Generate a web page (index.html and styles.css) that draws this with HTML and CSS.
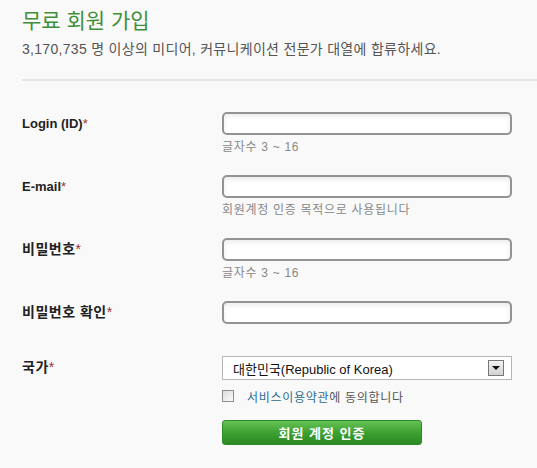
FILE: index.html
```html
<!DOCTYPE html>
<html lang="ko">
<head>
    <meta charset="UTF-8">
    <title>무료 회원 가입</title>
    <link rel="stylesheet" href="styles.css">
</head>
<body>

<div class="page">
    <div class="header">
        <h1 class="title">무료 회원 가입</h1>
        <p class="subtitle">3,170,735 명 이상의 미디어, 커뮤니케이션 전문가 대열에 합류하세요.</p>
    </div>

    <form class="signup">
        <div class="field">
            <label class="field-label">Login (ID)<span class="req">*</span></label>
            <div class="field-control">
                <input class="text-input" type="text">
                <div class="hint">글자수 3 ~ 16</div>
            </div>
        </div>

        <div class="field">
            <label class="field-label">E-mail<span class="req">*</span></label>
            <div class="field-control">
                <input class="text-input" type="text">
                <div class="hint">회원계정 인증 목적으로 사용됩니다</div>
            </div>
        </div>

        <div class="field">
            <label class="field-label ko">비밀번호<span class="req">*</span></label>
            <div class="field-control">
                <input class="text-input" type="password">
                <div class="hint">글자수 3 ~ 16</div>
            </div>
        </div>

        <div class="field no-hint">
            <label class="field-label ko">비밀번호 확인<span class="req">*</span></label>
            <div class="field-control">
                <input class="text-input" type="password">
            </div>
        </div>

        <div class="field">
            <label class="field-label ko">국가<span class="req">*</span></label>
            <div class="field-control">
                <div class="select-box">
                    <span>대한민국(Republic of Korea)</span>
                    <span class="select-arrow"></span>
                </div>
                <div class="agree">
                    <span class="checkbox"></span>
                    <span><a href="#">서비스이용약관</a>에 동의합니다</span>
                </div>
                <button type="button" class="submit-btn">회원 계정 인증</button>
            </div>
        </div>
    </form>
</div>

</body>
</html>
```

FILE: styles.css
```css
body {
    margin: 0;
    background-color: #f9f9f9;
    font-family: "Liberation Sans", "Noto Sans CJK KR", sans-serif;
    color: #333;
}

.page {
    padding-left: 22px;
}

.header {
    padding-top: 8px;
    padding-bottom: 21px;
    border-bottom: 2px solid #e6e6e6;
}

.title {
    margin: 0;
    font-size: 21px;
    line-height: 26px;
    font-weight: normal;
    color: #3f8f3a;
}

.subtitle {
    margin: 6px 0 0;
    font-size: 14px;
    line-height: 18px;
    letter-spacing: 0.3px;
    color: #555;
}

.signup {
    padding-top: 31px;
}

.field {
    display: grid;
    grid-template-columns: 200px 290px;
    margin-bottom: 20px;
}

.field.no-hint {
    margin-bottom: 32px;
}

.field-label {
    font-size: 13px;
    line-height: 23px;
    font-weight: bold;
    color: #222;
}

.field-label.ko {
    font-size: 14px;
    letter-spacing: 0.5px;
}

.req {
    color: #a03030;
    font-weight: normal;
}

.text-input {
    display: block;
    box-sizing: border-box;
    width: 290px;
    height: 23px;
    margin: 0;
    border: 2px solid #939393;
    border-radius: 5px;
    background-color: #fff;
    box-shadow: inset 0 3px 4px rgba(0, 0, 0, 0.07);
    outline: none;
}

.hint {
    margin-top: 5px;
    font-size: 12px;
    line-height: 15px;
    letter-spacing: 0.7px;
    color: #888;
}

.select-box {
    box-sizing: border-box;
    display: flex;
    align-items: center;
    justify-content: space-between;
    width: 290px;
    height: 24px;
    padding: 0 7px 0 10px;
    border: 1px solid #b5b5b5;
    background-color: #fff;
    font-size: 13px;
    color: #111;
}

.select-arrow {
    box-sizing: border-box;
    width: 16px;
    height: 16px;
    border: 1px solid #777;
    background: linear-gradient(#f4f4f4, #d0d0d0);
    position: relative;
}

.select-arrow::after {
    content: "";
    position: absolute;
    left: 3px;
    top: 5px;
    border-left: 4px solid transparent;
    border-right: 4px solid transparent;
    border-top: 4px solid #111;
}

.agree {
    display: flex;
    align-items: center;
    gap: 13px;
    margin-top: 8px;
    height: 16px;
    font-size: 12px;
    letter-spacing: 0.7px;
    color: #555;
}

.checkbox {
    box-sizing: border-box;
    width: 12px;
    height: 12px;
    border: 1px solid #8e8f8f;
    background: linear-gradient(135deg, #dcdcdc, #fafafa);
}

.agree a {
    color: #2f6e8c;
    text-decoration: none;
}

.submit-btn {
    display: block;
    width: 200px;
    height: 25px;
    margin-top: 16px;
    padding: 0;
    border: 1px solid #2e8a26;
    border-radius: 3px;
    background: linear-gradient(#66c253, #3a9e2f 55%, #2c8a24);
    color: #fff;
    font-family: "Liberation Sans", "Noto Sans CJK KR", sans-serif;
    font-size: 13px;
    font-weight: bold;
    letter-spacing: 1px;
    cursor: pointer;
}
```
